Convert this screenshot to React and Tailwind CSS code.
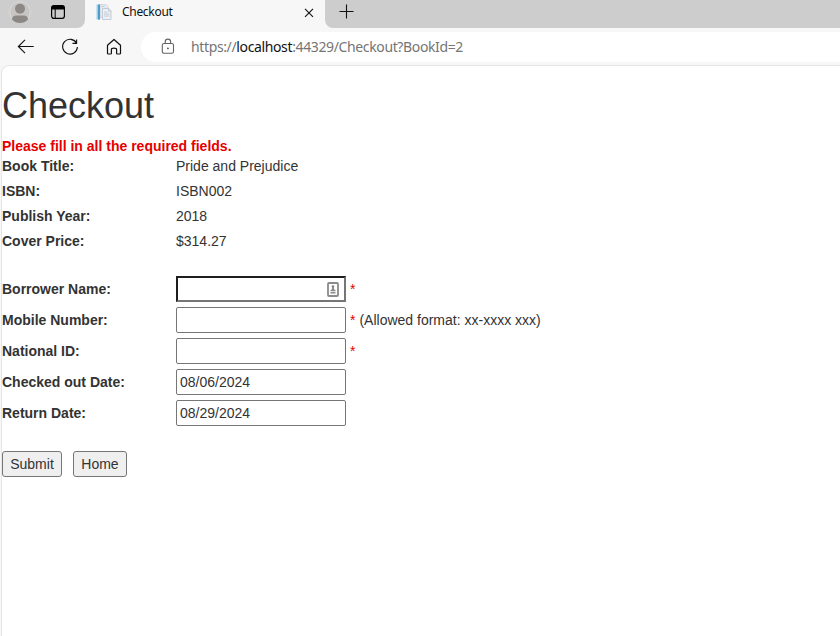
import React from "react";

const details = [
  ["Book Title:", "Pride and Prejudice"],
  ["ISBN:", "ISBN002"],
  ["Publish Year:", "2018"],
  ["Cover Price:", "$314.27"],
];

const fields = [
  { label: "Borrower Name:", value: "", required: true, focused: true },
  { label: "Mobile Number:", value: "", required: true, hint: "(Allowed format: xx-xxxx xxx)" },
  { label: "National ID:", value: "", required: true },
  { label: "Checked out Date:", value: "08/06/2024" },
  { label: "Return Date:", value: "08/29/2024" },
];

function TabStrip() {
  return (
    <div className="flex h-7 bg-[#f7f7f7]">
      <div className="flex w-[85px] shrink-0 rounded-br-lg bg-[#cdcdcd]">
        <svg className="ml-[9px] h-[24px] w-[22px]" viewBox="0 0 22 24" fill="none">
          <circle cx="11" cy="12" r="10.3" fill="#c8c6c4" stroke="#dcdad8" />
          <circle cx="11" cy="8.7" r="5" fill="#8b8886" />
          <path d="M3 19.5c0-3 2-4 4-4h8c2 0 4 1 4 4-2 2.5-5 3.4-8 3.4s-6-.9-8-3.4Z" fill="#8b8886" />
        </svg>
        <svg className="mt-1 ml-[19px] h-4 w-4" viewBox="0 0 16 16" fill="none" stroke="#000">
          <rect x="1.6" y="1.6" width="12.8" height="12.8" rx="2.3" strokeWidth="1.2" />
          <path d="M2 3.5C2 2.3 2.6 2 3.7 2h8.6c1.1 0 1.7.3 1.7 1.5V5H2Z" fill="#000" />
          <path d="M5.2 5v9.2" strokeWidth="1" />
        </svg>
      </div>
      <div className="flex w-[240px] shrink-0">
        <svg className="mt-1 ml-[11px] h-[17px] w-[17px]" viewBox="0 0 17 17" fill="none">
          <path d="M4 .5h6l2 2v11H4z" fill="#e6ebf1" stroke="#c5ccd5" strokeWidth=".7" />
          <path d="M.5.5h3.6v15H.5z" fill="#a5cfe8" />
          <path d="M2 .5h2v15H2z" fill="#4c9ccb" />
          <path d="M6.5 4.5h6.3l2.2 2.3v8.7H6.5z" fill="#edf0f5" stroke="#b7c0cb" strokeWidth=".8" />
          <path d="M12.5 4.5v2.7H15M8 8h3M8 10h5.5M8 12h5.5M5.5 2.5h3" stroke="#b9c2ce" strokeWidth=".8" />
        </svg>
        <span className="ml-[9px] h-6 w-[170px] font-['Noto_Sans',sans-serif] text-[12px] leading-[24px] tracking-[-0.3px] text-[#111]">
          Checkout
        </span>
        <svg className="mt-2 ml-[12px] h-[10px] w-[10px]" viewBox="0 0 10 10" stroke="#111" strokeWidth="1.1">
          <path d="m1 .8 8 8M9 .8 1 8.8" />
        </svg>
      </div>
      <div className="flex flex-1 rounded-bl-lg bg-[#cdcdcd]">
        <svg className="mt-1 ml-[14px] h-[15px] w-[15px]" viewBox="0 0 15 15" stroke="#111" strokeWidth="1.1">
          <path d="M.5 7.5h14M7.5.5v14" />
        </svg>
      </div>
    </div>
  );
}

function Toolbar() {
  return (
    <div className="flex h-[37px] bg-[#f7f7f7] pt-1">
      <svg className="mt-[6px] ml-[17px] h-[18px] w-[18px]" viewBox="0 0 18 18" fill="none" stroke="#111" strokeWidth="1.1">
        <path d="M16.7 8.5H1.3M8 1.8 1.3 8.5 8 15.2" />
      </svg>
      <svg className="mt-[6px] ml-[26px] h-[18px] w-[18px]" viewBox="0 0 18 18" fill="none" stroke="#111" strokeWidth="1.1">
        <path d="M15.6 5.3A7.4 7.4 0 1 0 16.4 9M15.6 1.4v4h-4.1" />
      </svg>
      <svg className="mt-[6px] ml-[26px] h-[18px] w-[18px]" viewBox="0 0 18 18" fill="none" stroke="#111" strokeWidth="1.2" strokeLinejoin="round">
        <path d="M2.5 7.3 9 1.5l6.5 5.8v7.9q0 .8-.8.8h-2.4q-.7 0-.7-.8v-3.7q0-1.3-2.6-1.3t-2.6 1.3v3.7q0 .8-.8.8H3.3q-.8 0-.8-.8Z" />
      </svg>
      <div className="ml-[18px] flex h-[30px] flex-1 rounded-l-full bg-white">
        <svg className="mt-[6px] ml-[20px] h-[17px] w-[14px]" viewBox="0 0 14 17" fill="none" stroke="#636363" strokeWidth="1.1">
          <rect x="1.3" y="5.5" width="11.2" height="9.8" rx="1.8" />
          <path d="M4.2 5.5V3.8a2.7 2.7 0 0 1 5.4 0v1.7" />
          <circle cx="6.9" cy="10.4" r=".6" fill="#636363" stroke="none" />
          <circle cx="6.9" cy="10.4" r=".4" />
        </svg>
        <span className="ml-[16px] font-['Noto_Sans',sans-serif] text-[14px] leading-[30px] tracking-[-0.37px] whitespace-nowrap text-[#757575]">
          https://<span className="text-[#111]">localhost</span>:44329/Checkout?BookId=2
        </span>
      </div>
    </div>
  );
}

function Field({ field }) {
  return (
    <div className="flex h-[26px] items-center">
      <label className="w-[174px] font-bold">{field.label}</label>
      <div
        className={
          field.focused
            ? "flex h-[26px] w-[170px] items-center justify-end border-2 border-t-[#1e1e1e] border-r-[#767676] border-b-[#767676] border-l-[#1e1e1e] bg-white pr-[5px]"
            : "flex h-[26px] w-[170px] items-center rounded-[2px] border border-[#767676] bg-white px-[3px]"
        }
      >
        {field.value}
        {field.focused && (
          <svg className="h-[15px] w-[12px]" viewBox="0 0 12 15" fill="none">
            <rect x="1" y="1" width="10" height="13" rx="1" stroke="#8b8b8b" strokeWidth="1.8" />
            <circle cx="6" cy="4.6" r="1.3" fill="#858585" />
            <path d="M5 5h2v2.3l1.5.7v1.2h-5V8L5 7.3ZM3.5 10h5v1.5h-5z" fill="#8b8b8b" />
          </svg>
        )}
      </div>
      {field.required && <span className="ml-1 text-[#e60000]">*</span>}
      {field.hint && <span className="ml-1">{field.hint}</span>}
    </div>
  );
}

export default function App() {
  return (
    <div className="flex h-[636px] w-[840px] flex-col overflow-hidden bg-[#f7f7f7] font-['Liberation_Sans',Arial,sans-serif] text-[14px] leading-5 text-[#333]">
      <TabStrip />
      <Toolbar />
      <div className="ml-px flex-1 rounded-tl-lg border-t border-l border-[#e6e6e6] bg-white">
        <h1 className="pt-5 text-[36px] leading-[40px]">Checkout</h1>
        <p className="mt-[10px] font-bold text-[#e60000]">Please fill in all the required fields.</p>
        <dl className="flex flex-col gap-[5px]">
          {details.map(([term, value]) => (
            <div key={term} className="flex">
              <dt className="w-[174px] font-bold">{term}</dt>
              <dd>{value}</dd>
            </div>
          ))}
        </dl>
        <div className="mt-[25px] flex flex-col gap-[5px]">
          {fields.map((field) => (
            <Field key={field.label} field={field} />
          ))}
        </div>
        <div className="mt-[25px] flex gap-[11px]">
          <button className="h-[26px] w-[60px] rounded-[3px] border border-[#767676] bg-[#efefef]">Submit</button>
          <button className="h-[26px] w-[54px] rounded-[3px] border border-[#767676] bg-[#efefef]">Home</button>
        </div>
      </div>
    </div>
  );
}
